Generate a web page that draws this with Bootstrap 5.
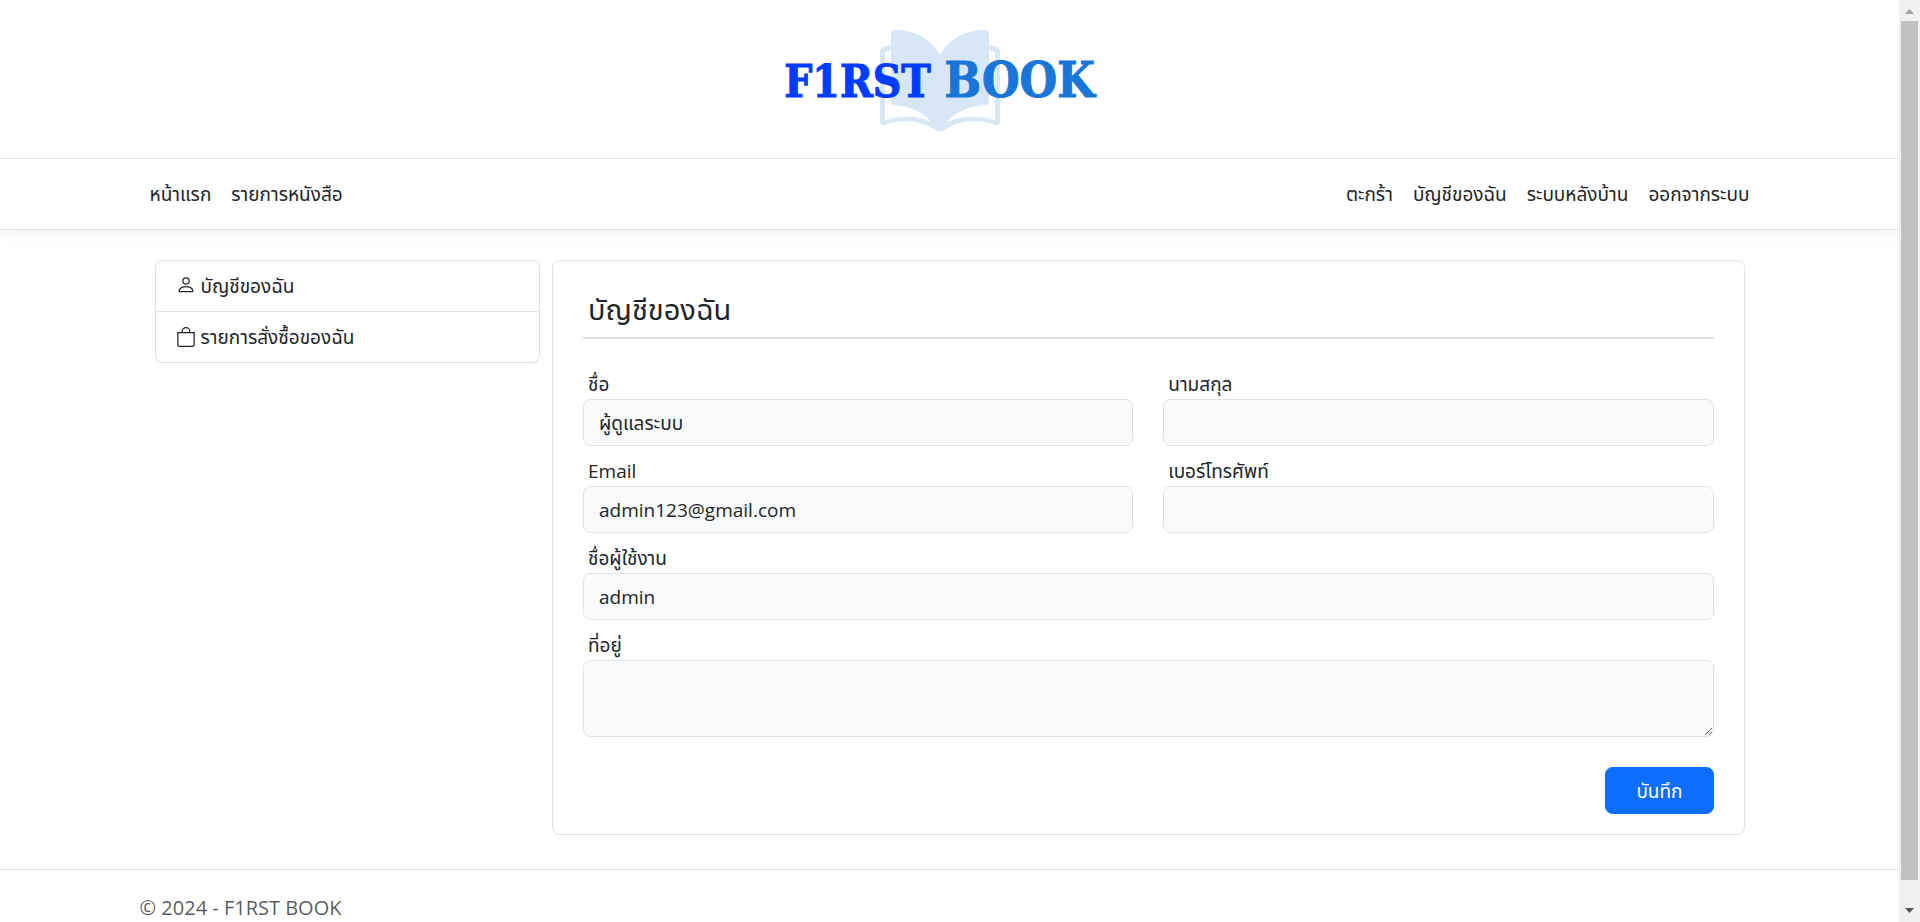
<!DOCTYPE html>
<html lang="th">
<head>
<meta charset="utf-8">
<meta name="viewport" content="width=device-width, initial-scale=1">
<title>บัญชีของฉัน - F1RST BOOK</title>
<link href="https://cdn.jsdelivr.net/npm/bootstrap@5.3.0/dist/css/bootstrap.min.css" rel="stylesheet">
<style>
:root { font-size: 20px; --bs-body-font-family: "Open Sans", "Noto Sans Thai", "Noto Sans", sans-serif; --bs-body-font-size: 19px; }
body, .form-control, .btn { font-size: 19px; line-height: 30px; }
.container { max-width: 1650px; }
.brand-bar { height: 158px; padding: 3px 20px 0 0; }
.brand { display: grid; place-items: center; }
.brand > * { grid-area: 1 / 1; }
.brand-book { width: 120px; height: 102px; color: #d8e7f6; }
.brand-name { font: bold 44px/48px "DejaVu Serif Condensed", "DejaVu Serif", serif; color: #003cff; -webkit-text-stroke: 1px currentColor; position: relative; white-space: nowrap; }
.brand-name span { font-size: 48px; color: #1976d8; }
.main-nav { box-shadow: 0 5px 15px rgba(0, 0, 0, .05); }
.main-row { padding: 30px 15px 34px; }
.side-col { padding-right: 12px; }
.list-icon { width: 20px; height: 20px; }
.page-title { font-size: 29px; line-height: 36px; }
.form-control { background-color: #f8fafc; border-color: #dee2e6; }
.site-footer { font-size: 20px; line-height: 75px; }
.scroll-rail { width: 21px; background: #f1f1f1; padding: 0 2px; }
.scroll-cap { height: 21px; }
.scroll-end { height: 42px; }
.scroll-thumb { background: #c1c1c1; }
</style>
</head>
<body class="d-flex bg-white">
<div class="flex-grow-1 overflow-hidden">
  <header>
    <div class="brand-bar d-flex justify-content-center align-items-center">
      <a class="brand text-decoration-none" href="#">
        <svg class="brand-book" viewBox="0 0 120 102" fill="currentColor" aria-hidden="true">
          <path d="M15 0C35 0 52 10 60 25C68 10 85 0 105 0Q109 0 109 4V71Q109 75 105 75C88 76 74 83 67 92Q82 86 96 87Q106 87 115 90V22L109 20V15L117 17Q120 18 120 21V92Q120 96 116 95C97 88 77 91 64 100Q60 103 56 100C43 91 23 88 4 95Q0 96 0 92V21Q0 18 3 17L11 15V20L5 22V90Q14 87 24 87Q38 86 51 92C45 83 31 76 14 75Q11 75 11 71V4Q11 0 15 0Z"/>
        </svg>
        <span class="brand-name">F1RST <span>BOOK</span></span>
      </a>
    </div>
    <nav class="main-nav navbar navbar-expand border-top border-bottom bg-white">
      <div class="container">
        <ul class="navbar-nav me-auto">
          <li class="nav-item"><a class="nav-link text-dark" href="#">หน้าแรก</a></li>
          <li class="nav-item"><a class="nav-link text-dark" href="#">รายการหนังสือ</a></li>
        </ul>
        <ul class="navbar-nav">
          <li class="nav-item"><a class="nav-link text-dark" href="#">ตะกร้า</a></li>
          <li class="nav-item"><a class="nav-link text-dark" href="#">บัญชีของฉัน</a></li>
          <li class="nav-item"><a class="nav-link text-dark" href="#">ระบบหลังบ้าน</a></li>
          <li class="nav-item"><a class="nav-link text-dark" href="#">ออกจากระบบ</a></li>
        </ul>
      </div>
    </nav>
  </header>

  <main class="container">
    <div class="main-row row g-0">
      <div class="col-3 side-col">
        <div class="list-group">
          <a class="list-group-item list-group-item-action d-flex align-items-center gap-1" href="#">
            <svg class="list-icon" viewBox="0 0 16 16" fill="currentColor" aria-hidden="true"><path d="M8 7a3 3 0 1 0 0-6 3 3 0 0 0 0 6Zm2-3a2 2 0 1 1-4 0 2 2 0 0 1 4 0Zm4 8c0 1-1 1-1 1H3s-1 0-1-1 1-4 6-4 6 3 6 4Zm-1-.004c-.001-.246-.154-.986-.832-1.664C11.516 9.680 10.289 9 8 9c-2.290 0-3.516.680-4.168 1.332-.678.678-.830 1.418-.832 1.664h10Z"/></svg>
            <span>บัญชีของฉัน</span>
          </a>
          <a class="list-group-item list-group-item-action d-flex align-items-center gap-1" href="#">
            <svg class="list-icon" viewBox="0 0 16 16" fill="currentColor" aria-hidden="true"><path d="M8 1a2.500 2.500 0 0 1 2.500 2.500V4h-5v-.5A2.500 2.500 0 0 1 8 1Zm3.500 3v-.5a3.500 3.500 0 1 0-7 0V4H1v10a2 2 0 0 0 2 2h10a2 2 0 0 0 2-2V4h-3.500ZM2 5h12v9a1 1 0 0 1-1 1H3a1 1 0 0 1-1-1V5Z"/></svg>
            <span>รายการสั่งซื้อของฉัน</span>
          </a>
        </div>
      </div>
      <div class="col-9">
        <form class="border rounded px-4 pt-4 pb-3">
          <h1 class="page-title fw-normal border-bottom border-2 px-1 pb-2 mb-4">บัญชีของฉัน</h1>
          <div class="row">
            <div class="col-6">
              <label class="d-block px-1" for="firstName">ชื่อ</label>
              <input class="form-control" id="firstName" type="text" value="ผู้ดูแลระบบ">
            </div>
            <div class="col-6">
              <label class="d-block px-1" for="lastName">นามสกุล</label>
              <input class="form-control" id="lastName" type="text">
            </div>
            <div class="col-6 mt-2">
              <label class="d-block px-1" for="email">Email</label>
              <input class="form-control" id="email" type="email" value="admin123@gmail.com">
            </div>
            <div class="col-6 mt-2">
              <label class="d-block px-1" for="phone">เบอร์โทรศัพท์</label>
              <input class="form-control" id="phone" type="tel">
            </div>
            <div class="col-12 mt-2">
              <label class="d-block px-1" for="userName">ชื่อผู้ใช้งาน</label>
              <input class="form-control" id="userName" type="text" value="admin">
            </div>
            <div class="col-12 mt-2">
              <label class="d-block px-1" for="address">ที่อยู่</label>
              <textarea class="form-control" id="address" rows="2"></textarea>
            </div>
          </div>
          <div class="text-end mt-4">
            <button class="btn btn-primary px-4" type="submit">บันทึก</button>
          </div>
        </form>
      </div>
    </div>
  </main>

  <footer class="site-footer border-top text-muted">
    <div class="container">© 2024 - F1RST BOOK</div>
  </footer>
</div>
<div class="scroll-rail sticky-top vh-100 flex-shrink-0 d-flex flex-column" aria-hidden="true">
  <svg class="scroll-cap" viewBox="0 0 17 21"><path d="M4 14h9L8.500 9Z" fill="#a3a3a3"/></svg>
  <div class="scroll-thumb flex-grow-1"></div>
  <svg class="scroll-end" viewBox="0 0 17 42"><path d="M4 28h9L8.500 33Z" fill="#505050"/></svg>
</div>
<script src="https://cdn.jsdelivr.net/npm/bootstrap@5.3.0/dist/js/bootstrap.bundle.min.js"></script>
</body>
</html>
